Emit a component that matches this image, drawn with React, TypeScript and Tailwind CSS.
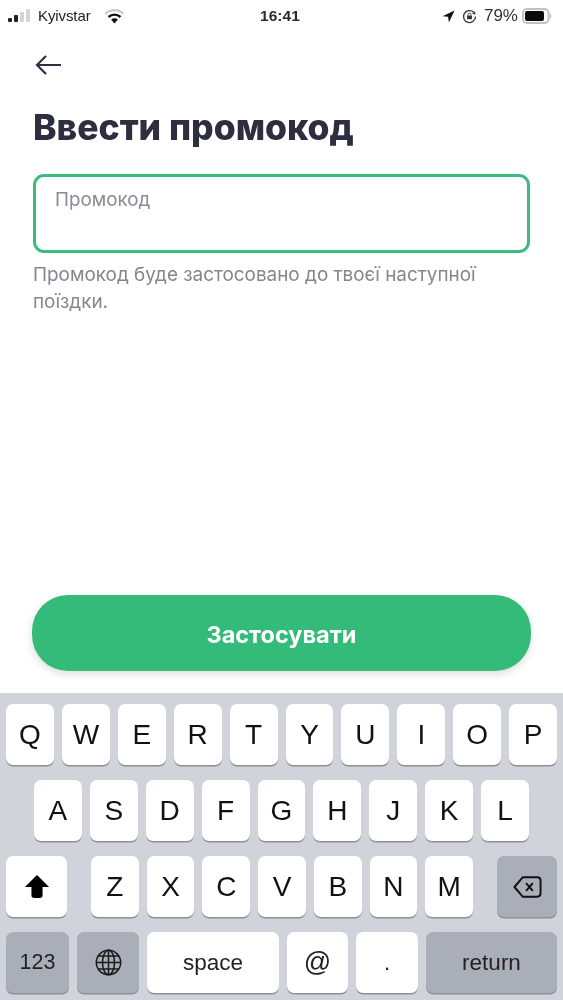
import React from "react";

const Key = ({ label, className = "" }: { label: React.ReactNode; className?: string }) => (
  <div className={`h-[61px] rounded-[7px] bg-white shadow-[0_1.5px_0_#8d9098] flex items-center justify-center text-[#111] ${className}`}>
    {label}
  </div>
);

const Letter = ({ c }: { c: string }) => <Key label={c} className="flex-1 text-[28px] leading-none" />;

const Signal = () => (
  <svg width="22" height="14" viewBox="0 0 22 14" className="block">
    <rect x="0" y="9" width="4" height="4" rx="1" fill="#222" />
    <rect x="6" y="6" width="4" height="7" rx="1" fill="#222" />
    <rect x="12" y="3" width="4" height="10" rx="1" fill="#d4d4d4" />
    <rect x="18" y="0" width="4" height="13" rx="1" fill="#d4d4d4" />
  </svg>
);

const Wifi = () => (
  <svg width="21" height="15" viewBox="0 0 20 15" className="block">
    <path d="M1 4.8 C6 0 14 0 19 4.8" fill="none" stroke="#c8c8c8" strokeWidth="2.2" />
    <path d="M4 8 C7.5 4.8 12.5 4.8 16 8" fill="none" stroke="#111" strokeWidth="2.4" />
    <path d="M6.6 10.4 L10 14.4 L13.4 10.4 C11.4 8.7 8.6 8.7 6.6 10.4Z" fill="#111" />
  </svg>
);

const Battery = () => (
  <svg width="30" height="16" viewBox="0 0 30 16" className="block">
    <rect x="1" y="1" width="25.5" height="14" rx="4" fill="none" stroke="#c2c2c2" strokeWidth="2" />
    <rect x="3" y="3" width="19" height="10" rx="2" fill="#0c0c0c" />
    <path d="M28 5.5 C29.6 6 29.6 10 28 10.5Z" fill="#bbb" />
  </svg>
);

export default function App() {
  return (
    <div className="w-[563px] h-[1000px] overflow-hidden bg-white flex flex-col font-['Inter','Noto_Sans',sans-serif] blur-[0.5px]">
      {/* status bar */}
      <div className="h-[32px] shrink-0 grid grid-cols-3 items-center pl-[8px] pr-[11px] font-['Liberation_Sans',sans-serif] text-[#2c2c2e] text-[15px]">
        <div className="flex items-center gap-[8px]">
          <Signal />
          <span className="text-[#222] tracking-[-0.1px]">Kyivstar</span>
          <span className="ml-[5px]"><Wifi /></span>
        </div>
        <div className="text-center font-bold text-[15.5px] tracking-[0.1px]">16:41</div>
        <div className="flex items-center justify-end gap-[4px]">
          <svg width="13" height="13" viewBox="0 0 14 14"><path d="M13.5 0.5 L0.5 6.6 L6.6 7.4 L7.4 13.5Z" fill="#111" /></svg>
          <svg width="15" height="15" viewBox="0 0 16 16" className="ml-[3px] mr-[3px]">
            <path d="M14.4 8 A6.4 6.4 0 1 1 12.4 3.4" fill="none" stroke="#333" strokeWidth="1.4" />
            <path d="M14.2 2.4 L14 6 L10.8 4.8Z" fill="#333" />
            <rect x="5.4" y="7" width="5.2" height="4" rx="0.6" fill="#333" />
            <path d="M6.4 7 V6 a1.6 1.6 0 0 1 3.2 0 V7" fill="none" stroke="#333" strokeWidth="1" />
          </svg>
          <span className="text-[#333] text-[17px]">79%</span>
          <Battery />
        </div>
      </div>

      {/* content */}
      <div className="flex-1 flex flex-col px-[33px]">
        <svg width="28" height="24" viewBox="0 0 28 24" className="block mt-[21px] ml-[2px] text-[#2f3142]">
          <path d="M26 12 H2 M11 3 L2 12 L11 21" fill="none" stroke="currentColor" strokeWidth="2.2" />
        </svg>
        <h1 className="mt-[28px] text-[35.5px] leading-[46px] font-extrabold text-[#2d2e3f]">Ввести промокод</h1>
        <div className="mt-[23px] h-[79px] rounded-[11px] border-[3px] border-[#3dbb7e] px-[19px] pt-[9.5px] text-[18.8px] leading-[26px] text-[#8a8b93]">
          Промокод
        </div>
        <p className="mt-[8px] text-[18.9px] leading-[27px] text-[#85868f]">
          Промокод буде застосовано до твоєї наступної<br />поїздки.
        </p>
        <div className="mt-auto mb-[22px] h-[76px] -mx-[1px] rounded-[36px] bg-[#34bb79] shadow-[0_3px_8px_rgba(0,0,0,0.14)] flex items-center justify-center text-white font-bold text-[23.5px] pt-[3px]">
          Застосувати
        </div>
      </div>

      {/* keyboard */}
      <div className="h-[307px] shrink-0 bg-[#d0d3da] flex flex-col gap-[15px] pt-[11px] font-['Liberation_Sans',sans-serif]">
        <div className="flex gap-[8px] px-[6px]">
          {"QWERTYUIOP".split("").map((c) => <Letter key={c} c={c} />)}
        </div>
        <div className="flex gap-[8px] px-[34px]">
          {"ASDFGHJKL".split("").map((c) => <Letter key={c} c={c} />)}
        </div>
        <div className="flex px-[6px]">
          <Key
            className="w-[61px] shrink-0"
            label={
              <svg width="28" height="25" viewBox="0 0 28 27">
                <path d="M14 1 L27 14 H20 V23 Q20 26 17 26 H11 Q8 26 8 23 V14 H1Z" fill="#000" />
              </svg>
            }
          />
          <div className="flex-1 flex gap-[8px] mx-[24px]">
            {"ZXCVBNM".split("").map((c) => <Letter key={c} c={c} />)}
          </div>
          <Key
            className="w-[60px] shrink-0 !bg-[#a9aeb9]"
            label={
              <svg width="29" height="24" viewBox="0 0 30 24">
                <path d="M10 2 H25 Q28.5 2 28.5 5.5 V18.5 Q28.5 22 25 22 H10 L1.5 12Z" fill="none" stroke="#111" strokeWidth="2" strokeLinejoin="round" />
                <path d="M13.5 8 L20.5 16 M20.5 8 L13.5 16" stroke="#111" strokeWidth="2" />
              </svg>
            }
          />
        </div>
        <div className="flex gap-[8px] px-[6px]">
          <Key label="123" className="w-[63px] !bg-[#a9aeb9] text-[21.5px] !text-[#222]" />
          <Key
            className="w-[62px] !bg-[#a9aeb9]"
            label={
              <svg width="27" height="27" viewBox="0 0 27 27" fill="none" stroke="#1a1a1a" strokeWidth="1.5">
                <circle cx="13.5" cy="13.5" r="12.2" />
                <ellipse cx="13.5" cy="13.5" rx="6" ry="12.2" />
                <path d="M13.5 1.3 V25.7 M1.3 13.5 H25.7 M3.2 7 H23.8 M3.2 20 H23.8" />
              </svg>
            }
          />
          <Key label="space" className="w-[132px] text-[22.5px] !text-[#222]" />
          <Key label="@" className="w-[61px] text-[27px] !text-[#222]" />
          <Key label="." className="w-[62px] text-[22px] !text-[#222]" />
          <Key label="return" className="flex-1 !bg-[#a9aeb9] text-[22.5px] !text-[#222]" />
        </div>
      </div>
    </div>
  );
}
